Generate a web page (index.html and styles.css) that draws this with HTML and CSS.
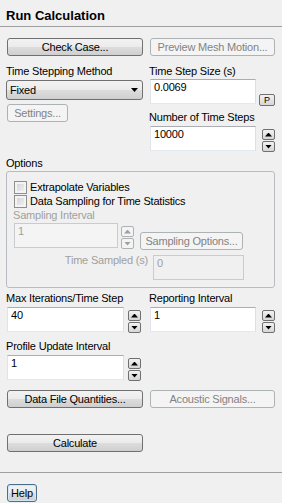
FILE: index.html
```html
<!DOCTYPE html>
<html lang="en">
<head>
  <meta charset="UTF-8" />
  <meta name="viewport" content="width=device-width, initial-scale=1" />
  <title>Run Calculation</title>
  <link rel="stylesheet" href="styles.css">
</head>
<body>
  <h1 class="title">Run Calculation</h1>

  <div class="content">
    <div class="btn-row">
      <button class="btn wide">Check Case...</button>
      <button class="btn narrow" disabled>Preview Mesh Motion...</button>
    </div>

    <div class="cols top-cols">
      <div class="col">
        <label class="lbl">Time Stepping Method</label>
        <div class="select">
          <span>Fixed</span>
          <span class="arrow"></span>
        </div>
        <button class="btn settings" disabled>Settings...</button>
      </div>
      <div class="col">
        <label class="lbl">Time Step Size (s)</label>
        <div class="field field-r first">
          <input class="input" type="text" value="0.0069" />
          <button class="p-btn">P</button>
        </div>
        <label class="lbl lbl-next">Number of Time Steps</label>
        <div class="field field-r">
          <input class="input" type="text" value="10000" />
          <div class="spin">
            <span class="spin-btn up"></span>
            <span class="spin-btn down"></span>
          </div>
        </div>
      </div>
    </div>

    <label class="lbl options-lbl">Options</label>
    <div class="group">
      <label class="check"><input type="checkbox" /> Extrapolate Variables</label>
      <label class="check"><input type="checkbox" /> Data Sampling for Time Statistics</label>
      <label class="lbl off sampling-lbl">Sampling Interval</label>
      <div class="sampling-row">
        <input class="input off-input sampling-input" type="text" value="1" disabled />
        <div class="spin off-spin">
          <span class="spin-btn up"></span>
          <span class="spin-btn down"></span>
        </div>
        <button class="btn sampling-btn" disabled>Sampling Options...</button>
      </div>
      <div class="sampled-row">
        <label class="lbl off sampled-lbl">Time Sampled (s)</label>
        <input class="input off-input sampled-input" type="text" value="0" disabled />
      </div>
    </div>

    <div class="cols iter-cols">
      <div class="col">
        <label class="lbl">Max Iterations/Time Step</label>
        <div class="field field-l">
          <input class="input" type="text" value="40" />
          <div class="spin">
            <span class="spin-btn up"></span>
            <span class="spin-btn down"></span>
          </div>
        </div>
        <label class="lbl profile-lbl">Profile Update Interval</label>
        <div class="field field-l profile-field">
          <input class="input" type="text" value="1" />
          <div class="spin">
            <span class="spin-btn up"></span>
            <span class="spin-btn down"></span>
          </div>
        </div>
      </div>
      <div class="col">
        <label class="lbl">Reporting Interval</label>
        <div class="field field-r">
          <input class="input" type="text" value="1" />
          <div class="spin">
            <span class="spin-btn up"></span>
            <span class="spin-btn down"></span>
          </div>
        </div>
      </div>
    </div>

    <div class="btn-row data-row">
      <button class="btn wide">Data File Quantities...</button>
      <button class="btn narrow" disabled>Acoustic Signals...</button>
    </div>

    <div class="btn-row calc-row">
      <button class="btn wide">Calculate</button>
    </div>
  </div>

  <div class="footer">
    <button class="btn help">Help</button>
  </div>
</body>
</html>
```

FILE: styles.css
```css
body {
  margin: 0;
  width: 282px;
  height: 503px;
  overflow: hidden;
  background: #f0f0f0;
  color: #000;
  font-family: "Liberation Sans", Arial, sans-serif;
  font-size: 11px;
  letter-spacing: -0.2px;
}
.title {
  margin: 0;
  padding: 8px 6px 3px;
  font-size: 13px;
  line-height: 15px;
  font-weight: bold;
  letter-spacing: 0;
  border-bottom: 1px solid #a0a0a0;
}
.content {
  padding: 0 7px 0 6px;
}
.btn {
  box-sizing: border-box;
  height: 18px;
  padding: 0;
  border: 1px solid #707070;
  border-radius: 3px;
  background: linear-gradient(#f2f2f2 0%, #ebebeb 50%, #dddddd 51%, #cfcfcf 100%);
  font: inherit;
  color: #000;
  letter-spacing: inherit;
}
.btn:disabled {
  border-color: #adb2b5;
  background: #f4f4f4;
  color: #838383;
}
.btn-row {
  display: flex;
  gap: 7px;
  margin-top: 11px;
}
.wide {
  width: 136px;
  margin-left: 1px;
}
.narrow {
  width: 125px;
}
.cols {
  display: grid;
  grid-template-columns: 137px 126px;
  column-gap: 6px;
}
.top-cols {
  margin-top: 9px;
}
.lbl {
  display: block;
  line-height: 13px;
}
.select {
  box-sizing: border-box;
  display: flex;
  align-items: center;
  justify-content: space-between;
  height: 20px;
  margin-top: 2px;
  padding: 0 4px 0 3px;
  border: 1px solid #707070;
  border-radius: 3px;
  background: linear-gradient(#f2f2f2 0%, #ebebeb 50%, #dddddd 51%, #cfcfcf 100%);
}
.arrow {
  width: 7px;
  height: 4px;
  background: #000;
  clip-path: polygon(0 0, 100% 0, 50% 100%);
}
.settings {
  display: block;
  width: 61px;
  margin: 4px 0 0 1px;
}
.field {
  display: flex;
  align-items: flex-start;
  height: 25px;
  margin-left: 1px;
}
.field-r .input {
  width: 106px;
}
.field-l .input {
  width: 117px;
}
.field.first {
  margin-top: 1px;
}
.input {
  box-sizing: border-box;
  height: 25px;
  margin: 0;
  padding: 1px 3px 10px;
  border: 1px solid #abadb3;
  border-color: #abadb3 #dbdfe6 #e3e9ef #e2e3ea;
  background: #fff;
  font: inherit;
  letter-spacing: inherit;
  color: #000;
  outline: none;
}
.lbl-next {
  margin-top: 7px;
}
.lbl-next + .field {
  margin-top: 2px;
}
.p-btn {
  box-sizing: border-box;
  display: flex;
  align-items: center;
  justify-content: center;
  width: 16px;
  height: 12px;
  margin: 15px 0 0 3px;
  padding: 0;
  border: 1px solid #707070;
  border-radius: 2px;
  background: linear-gradient(#f2f2f2, #d6d6d6);
  font: 9px/9px "Liberation Sans", Arial, sans-serif;
  color: #000;
}
.spin {
  display: flex;
  flex-direction: column;
  gap: 1px;
  margin-top: 3px;
}
.field-r .spin {
  margin-left: 6px;
}
.field-l .spin {
  margin-left: 4px;
}
.spin-btn {
  box-sizing: border-box;
  display: flex;
  align-items: center;
  justify-content: center;
  width: 13px;
  height: 11px;
  border: 1px solid #707070;
  border-radius: 2px;
  background: linear-gradient(#f2f2f2, #d6d6d6);
}
.spin-btn::after {
  content: "";
  width: 7px;
  height: 4px;
  background: #000;
}
.up::after {
  clip-path: polygon(50% 0, 100% 100%, 0 100%);
}
.down::after {
  clip-path: polygon(0 0, 100% 0, 50% 100%);
}
.off-spin .spin-btn {
  border-color: #adb2b5;
  background: #f4f4f4;
}
.off-spin .spin-btn::after {
  background: #a0a0a0;
}
.options-lbl {
  margin-top: 6px;
}
.group {
  margin-top: 1px;
  padding: 9px 0 7px 7px;
  border: 1px solid #b8bcc0;
  border-radius: 3px;
}
.check {
  display: flex;
  align-items: flex-start;
  gap: 3px;
  height: 14px;
  line-height: 13px;
}
.check input {
  appearance: none;
  box-sizing: border-box;
  width: 13px;
  height: 13px;
  margin: 0;
  border: 1px solid #8f8f8f;
  background: linear-gradient(135deg, #cdd0d4, #f4f4f4);
  box-shadow: inset 0 0 0 2px #f4f4f4;
}
.off {
  color: #a0a0a0;
}
.sampling-lbl {
  margin-left: -1px;
}
.sampling-row {
  display: flex;
  align-items: flex-start;
  height: 27px;
  margin-top: 1px;
}
.off-input {
  border-color: #c9cbcf;
  background: #f4f4f4;
  color: #a0a0a0;
}
.sampling-input {
  width: 104px;
}
.sampling-row .spin {
  margin-left: 3px;
}
.sampling-btn {
  width: 103px;
  margin: 9px 0 0 6px;
}
.sampled-row {
  display: flex;
  align-items: flex-start;
  gap: 5px;
  margin-top: 5px;
}
.sampled-lbl {
  width: 134px;
  margin-top: -1px;
  text-align: right;
}
.sampled-input {
  width: 91px;
  background: #f0f0f0;
}
.iter-cols {
  margin-top: 4px;
}
.iter-cols .lbl + .field {
  margin-top: 2px;
}
.iter-cols .profile-lbl {
  margin-top: 8px;
}
.iter-cols .profile-field {
  margin-top: 0;
}
.data-row {
  margin-top: 10px;
}
.calc-row {
  margin-top: 26px;
}
.footer {
  margin-top: 20px;
  padding: 11px 7px;
  border-top: 1px solid #a0a0a0;
}
.help {
  width: 30px;
  border-color: #4a6f8c;
  box-shadow: inset 0 0 0 1px #cde8f7;
}
```
